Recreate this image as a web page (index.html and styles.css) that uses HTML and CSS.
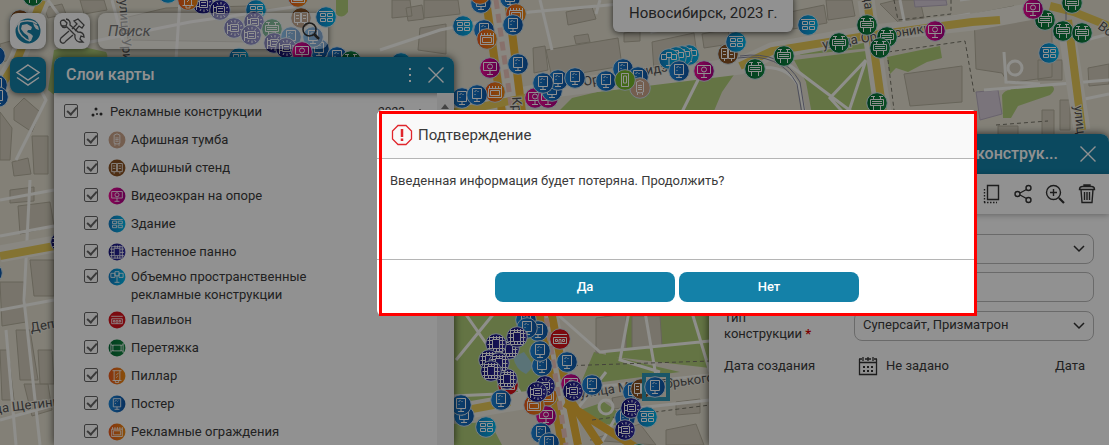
FILE: index.html
```html
<!DOCTYPE html>
<html lang="ru">
<head>
<meta charset="utf-8">
<title>Карта рекламных конструкций</title>
<meta name="viewport" content="width=device-width, initial-scale=1">
<link rel="stylesheet" href="styles.css">
</head>
<body>
<svg class="defs" width="0" height="0" aria-hidden="true">
  <defs>
    <linearGradient id="g-blue" x1="0" x2="1"><stop offset="0" stop-color="#1c87dc"/><stop offset="1" stop-color="#0e55a5"/></linearGradient>
    <linearGradient id="g-cyan" x1="0" x2="1"><stop offset="0" stop-color="#117cc4"/><stop offset="1" stop-color="#00b9ec"/></linearGradient>
    <linearGradient id="g-pink" x1="0" x2="1"><stop offset="0" stop-color="#f00c96"/><stop offset="1" stop-color="#a80086"/></linearGradient>
    <linearGradient id="g-orange" x1="0" x2="1"><stop offset="0" stop-color="#ee5a1c"/><stop offset="1" stop-color="#f08c14"/></linearGradient>
    <linearGradient id="g-indigo" x1="0" x2="1"><stop offset="0" stop-color="#14127c"/><stop offset="1" stop-color="#332ea4"/></linearGradient>
    <linearGradient id="g-green" x1="0" x2="1"><stop offset="0" stop-color="#006b34"/><stop offset="1" stop-color="#158a42"/></linearGradient>
  </defs>
  <symbol id="poster" width="22" height="22" viewBox="0 0 22 22"><circle cx="11" cy="11" r="10.3" fill="url(#g-blue)"/><path d="M6.500 4.500h9v10h-9zM11 14.500v3M8 17.500h6M8.500 8l2-2M11.500 8l1-1M8.500 11l1-1"/></symbol>
  <symbol id="building" width="22" height="22" viewBox="0 0 22 22"><circle cx="11" cy="11" r="10.3" fill="url(#g-cyan)"/><path d="M4 5.500h14M5.500 7.500h5v3h-5zM12.500 7.500h5v3h-5zM5.500 12.500h5v3h-5zM12.500 12.500h5v3h-5z"/></symbol>
  <symbol id="volume" width="22" height="22" viewBox="0 0 22 22"><circle cx="11" cy="11" r="10.3" fill="url(#g-cyan)"/><path d="M3.500 6.500h5v5h-5zM13.500 6.500h5v5h-5zM8.500 4.500h5v5h-5zM11 9.500v8M8 17.500h6"/></symbol>
  <symbol id="video" width="22" height="22" viewBox="0 0 22 22"><circle cx="11" cy="11" r="10.3" fill="url(#g-pink)"/><path d="M4.500 5.500h13v8h-13zM11 13.500v4M8 17.500h6M8.500 9.500a2.500 2.500 0 1 0 5 0a2.500 2.500 0 1 0-5 0"/></symbol>
  <symbol id="fence" width="22" height="22" viewBox="0 0 22 22"><circle cx="11" cy="11" r="10.3" fill="url(#g-orange)"/><path d="M4.500 7.500h13v9h-13zM6.500 9.500h9v5h-9zM5.500 5v3M8.500 5v3M11.500 5v3M14.500 5v3M17.500 5v3"/></symbol>
  <symbol id="pillar" width="22" height="22" viewBox="0 0 22 22"><circle cx="11" cy="11" r="10.3" fill="url(#g-orange)"/><path d="M5.500 4.500h11M7.500 4.500v12h7v-12M5.500 16.500h11M9 17v2h4v-2M10 10l3-3M10 13l2-2"/></symbol>
  <symbol id="pavilion" width="22" height="22" viewBox="0 0 22 22"><circle cx="11" cy="11" r="10.3" fill="#d8121c"/><path d="M4 6.500h14M4.500 9.500h13v6h-13M4.500 9.500v6M6.500 11.500h2v2h-2zM13.500 11.500h2v2h-2zM10 15.500v-4h2v4"/></symbol>
  <symbol id="stand" width="22" height="22" viewBox="0 0 22 22"><circle cx="11" cy="11" r="10.3" fill="#8a5222"/><path d="M4.500 5.500h6v10h-6zM11.500 5.500h6v10h-6zM6 8.500h3M6 11.500h3M13 8.500h3M13 11.500h3M7.500 16v2M14.500 16v2"/></symbol>
  <symbol id="column" width="22" height="22" viewBox="0 0 22 22"><circle cx="11" cy="11" r="10.3" fill="#cda58c"/><path d="M7.500 5q3.500-3 7 0v10q-3.500 2-7 0zM9 8.500h4M9 10.500h4M9 12.500h4M8.500 16v2M13.500 16v2"/></symbol>
  <symbol id="lime" width="22" height="22" viewBox="0 0 22 22"><circle cx="11" cy="11" r="10.3" fill="#77b82c"/><path d="M7.500 4.500h7v13h-7zM9.500 7h3v7h-3z"/></symbol>
  <symbol id="board" width="22" height="22" viewBox="0 0 22 22"><circle cx="11" cy="11" r="10.3" fill="url(#g-green)"/><path d="M4.500 7.500h13v6h-13zM6 9.500h10M6 11.500h10M7.500 4.500v3M14.500 4.500v3M7.500 14v4M14.500 14v4M5 4.500h4M13 4.500h4"/></symbol>
  <symbol id="banner" width="22" height="22" viewBox="0 0 22 22"><circle cx="11" cy="11" r="10.3" fill="url(#g-green)"/><path d="M3.500 5v12M18.500 5v12M6 7.500h10v7H6zM3.500 7l3 1M18.500 7l-3 1M3.500 15l3-1M18.500 15l-3-1"/></symbol>
  <symbol id="panel" width="22" height="22" viewBox="0 0 22 22"><circle cx="11" cy="11" r="10.3" fill="url(#g-indigo)"/><path d="M7.500 6.500h7v9h-7zM4.500 3.500v15M17.500 3.500v15M2.500 7.500h5M2.500 11.500h5M2.500 15.500h5M14.500 7.500h5M14.500 11.500h5M14.500 15.500h5M8.500 3v3M11.500 3v3M14.500 3v3M8.500 16v3M11.500 16v3M14.500 16v3M5 4.500h12M5 18.500h12"/></symbol>
  <symbol id="bracket" width="22" height="22" viewBox="0 0 22 22"><circle cx="11" cy="11" r="10.3" fill="url(#g-indigo)"/><path d="M4.500 6v11M4.500 8.500h3M4.500 13.500h3M7.500 7.500h8v7h-8zM9 9.500h5M9 12.500h5M8 3.500l1 2M12 3v2.500M16 4.500l-1.500 2M19 8.500l-2 .5M19 13l-2-.5M16 18l-1.500-2M12 19v-2.500M8 18l1-2"/></symbol>
</svg>

<main class="app">
  <svg class="map" role="img" aria-label="Карта">
    <rect width="100%" height="100%" fill="#e6e2d2"/>
    <g class="parks">
      <path d="M556 114L572 98L618 87L740 66L722 92L706 130H556z"/>
      <path d="M802 50L866 42L871 48L800 55zM794 60L866 51L876 120H813L806 82z"/>
      <path d="M887 57L940 46L942 58L927 62L908 72L896 68L890 74z"/>
      <path d="M1002 95Q1005 90 1010 90L1013 87L1050 85Q1058 88 1050 95L1018 106L1011 118H1003z"/>
      <path d="M440 306H544L550 396L440 406zM594 352L680 372L580 385zM604 306H710V368L606 356zM450 424L490 422L502 445H450zM580 410L604 402L618 412L620 426L606 424z"/>
      <path d="M54 50L74 45L106 52Q112 62 92 62L60 60L58 98L48 90zM336 0h12v12q-6 8-12 2z"/>
    </g>
    <path d="M513 357L524 352L534 366L526 374Q516 370 513 357z" fill="#9fcbd2"/>
    <g class="blocks">
      <path d="M44 8L62 4L66 14L48 18zM80 0h24l3 10-23 4zM124 18L166 8L250 6L250 42L128 40zM0 44L14 40L18 58L2 62zM14 108L24 98L40 112L32 132L14 120zM0 112L12 128L10 160H0zM32 136h16v38H34zM12 162l16-4 3 16-17 2zM10 190l24-3v14l-24 2zM18 206l32-4 4 24-34 8zM0 282h24l2 40-24 4zM30 260h24v36H34zM16 330h14l8 50H20zM38 350h14l2 34H40zM0 350h8l6 50H2zM24 384h24l4 26-20 6z"/>
      <path d="M392 0h18l2 16-20 2zM406 8l16-3 2 14-16 2zM424 0h34l2 14-36 4zM420 28l26-4v30l-28-4zM546 50l72-12 4 28-70 12zM566 12l26-5 4 12-28 6zM574 36l14-2 2 8-14 2zM624 33l16-2v10l-16 1zM652 42l42-9 4 30-44 8zM533 48l12-2 3 24-14 3zM702 34l26-5 2 15-26 4zM790 12l34-7 3 18-34 6zM826 0h26l3 16-27 4zM880 4l16-4h24l4 18-26 4zM974 14l40-8 8 14 30-3v60l-44 6-6-10-26-4zM904 74l58-8v36l-52 4zM1038 60h24v20h-24zM1088 68l21-4v20l-20 2zM998 126h20v14h-20zM1042 110h12v28l-12 4zM1060 100h10v30h-10z"/>
      <path d="M596 318l30-4v36l-30 3zM632 316h28l2 30-30 3zM590 440l50-16 16 21zM614 428l14-3 4 12-14 3zM666 430l30-6 8 21h-38zM676 402l24-3v14l-24 2zM612 398l16-3v12l-14 2z"/>
    </g>
    <g fill="#d6ccd8" stroke="#b9aec0"><path d="M914 0h32l1 5-32 2zM976 92l22-2 4 24-22 6z"/></g>
    <g class="streets">
      <path d="M0 96L30 70L46 100L16 160M0 200L54 190M0 236L54 226M0 310L54 300M48 0L80 44L190 22L300 6M30 180L24 300L40 445M0 420L54 405M6 330L16 445M112 0L128 60M180 0L176 60M380 50L440 30L530 12L620 4M540 0L552 50M600 0L596 14M648 0L652 32L700 20M744 70Q790 60 800 90L806 120M866 60L830 98L850 120M866 60L846 120M780 58L852 112M900 0L905 26L970 14M984 90L1060 84L1109 80M1004 52L1006 82L1040 84M960 0L1109 -20M1086 40L1109 34M1080 100L1109 94M700 76L682 112M452 396L548 392L720 374M460 306L520 392M500 306L456 360M548 306L600 352L720 340M630 306L620 360L660 372M644 306L656 376M690 306L710 372M575 412L606 372M600 445L620 410L710 400"/>
      <circle cx="1015" cy="68" r="7"/><circle cx="606" cy="407" r="7"/>
    </g>
    <g class="avenue-edge"><path d="M498 0L514 100L550 316L574 445M440 112L560 88L740 66L772 51L866 34L972 22L1040 10M866 0L884 120M1068 40L1082 130M42 0L16 62L0 88M0 254L60 243M440 415L550 396"/></g>
    <g class="avenue"><path d="M486 0L502 112L540 316L562 445M508 0L522 112L552 316L578 445" stroke="#ebb638"/><path d="M440 115L560 91M740 66L772 51L866 36L972 22L1000 20M867 0L884 120M1050 6L1074 12L1109 26M1068 20L1082 130M42 0L16 62L0 88M0 256L60 245M440 415L510 402" stroke="#e8cb58"/><path d="M565 403L640 450M570 400L600 445" stroke="#ebb638"/></g>
    <path d="M496 0L512 112L546 316L566 445" fill="none" stroke="#edc6bd" stroke-width="5" stroke-dasharray="9 5"/>
    <g fill="none" stroke="#787568" stroke-dasharray="4 3"><path d="M888 52L965 41L974 92M888 60L894 110M894 0L898 20L951 14V0M996 125L1048 121M560 366L740 360M592 420L710 405"/></g>
    <g fill="none" stroke="#8889a0"><path d="M740 56Q782 50 800 82L806 120M738 58Q780 52 797 84L803 120M1066 10V20"/></g>
    <g class="map-text">
      <text transform="translate(584 86) rotate(-10)">Орджоникидзе</text>
      <text transform="translate(823 49) rotate(-9)">улица Орджоники</text>
      <text transform="translate(119 0) rotate(86)">улица Урицкого</text>
      <text transform="translate(512 97) rotate(86)">Красный</text>
      <text transform="translate(862 -26) rotate(86)">улица</text>
      <text transform="translate(1074 106) rotate(84)">улица</text>
      <text transform="translate(1097 28) rotate(36)">Вокзальная</text>
      <text transform="translate(31 332) rotate(-10)">Депутатская</text>
      <text transform="translate(-26 416) rotate(-7)">улица Щетинкина</text>
      <text transform="translate(580 398) rotate(-8)">улица Максима</text>
      <text transform="translate(660 389) rotate(-8)">Горького</text>
    </g>

    <g class="markers">
      <use href="#board" x="22" y="-15"/><use href="#building" x="157" y="-18"/><use href="#bracket" x="192" y="-7"/><use href="#pillar" x="177" y="-11"/><use href="#bracket" x="209" y="-1"/><use href="#building" x="245" y="-1"/><use href="#fence" x="287" y="-14"/>
      <use href="#stand" x="9" y="9"/><use href="#poster" x="-16" y="45"/><use href="#poster" x="-14" y="74"/><use href="#poster" x="-13" y="86"/><use href="#panel" x="50" y="231"/><use href="#poster" x="-19" y="262"/>
      <use href="#stand" x="290" y="7"/><use href="#bracket" x="243" y="11"/><use href="#bracket" x="223" y="17"/><use href="#bracket" x="240" y="24"/><use href="#board" x="261" y="18"/><use href="#bracket" x="263" y="32"/><use href="#poster" x="280" y="26"/><use href="#poster" x="308" y="38"/><use href="#poster" x="302" y="26"/><use href="#bracket" x="275" y="37"/><use href="#poster" x="326" y="46"/><use href="#board" x="340" y="50"/><use href="#building" x="228" y="47"/>
      <use href="#poster" x="470" y="-8"/><use href="#fence" x="469" y="-17"/><use href="#poster" x="499" y="-13"/><use href="#fence" x="505" y="3"/><use href="#poster" x="502" y="14"/><use href="#building" x="452" y="15"/><use href="#poster" x="473" y="19"/><use href="#fence" x="476" y="28"/><use href="#video" x="479" y="57"/><use href="#poster" x="507" y="53"/><use href="#fence" x="484" y="81"/><use href="#poster" x="451" y="87"/><use href="#poster" x="466" y="84"/><use href="#building" x="390" y="52"/>
      <use href="#video" x="524" y="87"/><use href="#video" x="537" y="87"/><use href="#poster" x="541" y="80"/><use href="#poster" x="547" y="69"/><use href="#poster" x="532" y="72"/><use href="#poster" x="564" y="67"/><use href="#poster" x="595" y="70"/><use href="#poster" x="612" y="58"/><use href="#poster" x="627" y="66"/><use href="#column" x="629" y="77"/><use href="#lime" x="614" y="69"/>
      <use href="#volume" x="678" y="44"/><use href="#volume" x="671" y="45"/><use href="#volume" x="665" y="46"/><use href="#volume" x="658" y="48"/><use href="#poster" x="668" y="60"/><use href="#video" x="693" y="60"/><use href="#stand" x="717" y="43"/><use href="#building" x="725" y="31"/>
      <use href="#building" x="797" y="14"/><use href="#board" x="856" y="14"/><use href="#board" x="876" y="26"/><use href="#board" x="869" y="37"/><use href="#board" x="828" y="32"/><use href="#board" x="773" y="45"/><use href="#board" x="744" y="58"/><use href="#board" x="866" y="92"/><use href="#video" x="924" y="20"/><use href="#board" x="1034" y="9"/><use href="#video" x="1022" y="-2"/><use href="#board" x="1061" y="-8"/><use href="#board" x="1052" y="20"/><use href="#board" x="1071" y="22"/><use href="#building" x="1038" y="42"/>
      <use href="#poster" x="515" y="309"/><use href="#poster" x="527" y="320"/><use href="#poster" x="516" y="317"/><use href="#pavilion" x="549" y="328"/><use href="#pavilion" x="497" y="374"/><use href="#panel" x="498" y="338"/><use href="#panel" x="485" y="333"/><use href="#panel" x="478" y="349"/><use href="#panel" x="496" y="368"/><use href="#panel" x="488" y="352"/><use href="#panel" x="480" y="360"/><use href="#panel" x="506" y="326"/><use href="#poster" x="490" y="389"/><use href="#poster" x="531" y="355"/><use href="#poster" x="529" y="340"/><use href="#poster" x="556" y="351"/><use href="#poster" x="453" y="405"/><use href="#poster" x="450" y="394"/><use href="#building" x="475" y="416"/>
      <use href="#fence" x="536" y="385"/><use href="#bracket" x="534" y="375"/><use href="#video" x="535" y="405"/><use href="#fence" x="523" y="394"/><use href="#bracket" x="526" y="381"/><use href="#video" x="560" y="373"/><use href="#bracket" x="562" y="380"/><use href="#poster" x="581" y="374"/><use href="#poster" x="530" y="422"/><use href="#poster" x="538" y="432"/><use href="#poster" x="622" y="381"/><use href="#stand" x="630" y="378"/><use href="#poster" x="614" y="407"/><use href="#bracket" x="620" y="397"/><use href="#building" x="636" y="406"/><use href="#bracket" x="614" y="419"/><use href="#board" x="628" y="443"/>
      <rect x="644" y="375" width="24" height="24" fill="none" stroke="#2f97b8" stroke-width="4"/><use href="#poster" x="644" y="376"/>
    </g>
  </svg>

  <nav class="tools" aria-label="Инструменты">
    <button class="tool" type="button" aria-label="Карта мира"><svg width="30" height="30" viewBox="0 0 30 30"><circle cx="15" cy="15" r="12.500" fill="#1481a8"/><path d="M9 9L14 8L19 11L18 14L15 14L14 16L18 18L20 20L18 25L16 25L15 20L11 17L8 13zM20 7L25 10L26 14L23 13L21 10z" fill="#f3f6f7"/><path d="M2 12Q5 5 12 5Q19 4 24 8M7 6Q3 14 9 20Q13 24 17 25" fill="none" stroke="#f3f6f7" stroke-width="1.500"/></svg></button>
    <button class="tool" type="button" aria-label="Настройки"><svg width="28" height="28" viewBox="0 0 28 28" fill="none" stroke="#555" stroke-width="1.300"><path d="M3 8Q1 3 6 3L9 6L8 9L5 9zM3 8Q5 12 9 10L17 18Q16 23 21 25L25 25L22 22L23 19L26 20Q26 15 20 15L12 8Q13 3 8 2M14 12L19 7L16 4L20 2L26 8L24 11L21 9L17 14M11 14L3 21Q1 24 4 26Q6 27 8 24L15 18"/></svg></button>
    <form class="search"><input type="text" placeholder="Поиск" aria-label="Поиск"><button type="button" aria-label="Найти"><svg width="20" height="20" viewBox="0 0 20 20" fill="none" stroke="#333" stroke-width="1.500"><circle cx="8.500" cy="8.500" r="6.500"/><path d="M13 13l5 5" stroke-width="2.500"/></svg></button></form>
  </nav>
  <svg class="map map-front" aria-hidden="true"><g class="markers"><use href="#building" x="315" y="6"/><use href="#video" x="291" y="41"/></g></svg>
  <button class="tool layers-button" type="button" aria-label="Слои"><svg width="26" height="26" viewBox="0 0 26 26" fill="none" stroke="#fff" stroke-width="1.500"><path d="M13 3l11 7.500-11 7.500-11-7.500zM2 15.500L13 23l11-7.500"/></svg></button>
  <div class="place">Новосибирск, 2023 г.</div>

  <section class="panel layers">
    <header class="panel-head"><h2>Слои карты</h2>
      <button type="button" aria-label="Меню"><svg width="20" height="20" viewBox="0 0 20 20" fill="#fff"><path d="M9 3h2v2H9zM9 9h2v2H9zM9 15h2v2H9z"/></svg></button>
      <button type="button" aria-label="Закрыть"><svg width="20" height="20" viewBox="0 0 20 20" stroke="#fff" stroke-width="1.400"><path d="M2.500 2.500l15 15M17.500 2.500l-15 15"/></svg></button>
    </header>
    <div class="layers-body">
      <ul class="tree">
        <li class="root"><label><input type="checkbox" checked><svg class="dots" width="12" height="12" viewBox="0 0 12 12" fill="#333"><circle cx="5" cy="2" r="1.500"/><circle cx="2" cy="8" r="1.500"/><circle cx="10" cy="7" r="1.500"/><circle cx="6" cy="7" r="1"/></svg><span>Рекламные конструкции</span></label><span class="year">2023</span><svg class="fold" width="10" height="8" viewBox="0 0 10 8" fill="none" stroke="#333" stroke-width="1.500"><path d="M1 6l4-4 4 4"/></svg></li>
        <li><label><input type="checkbox" checked><svg class="kind" viewBox="0 0 22 22"><use href="#column"/></svg><span>Афишная тумба</span></label></li>
        <li><label><input type="checkbox" checked><svg class="kind" viewBox="0 0 22 22"><use href="#stand"/></svg><span>Афишный стенд</span></label></li>
        <li><label><input type="checkbox" checked><svg class="kind" viewBox="0 0 22 22"><use href="#video"/></svg><span>Видеоэкран на опоре</span></label></li>
        <li><label><input type="checkbox" checked><svg class="kind" viewBox="0 0 22 22"><use href="#building"/></svg><span>Здание</span></label></li>
        <li><label><input type="checkbox" checked><svg class="kind" viewBox="0 0 22 22"><use href="#panel"/></svg><span>Настенное панно</span></label></li>
        <li><label><input type="checkbox" checked><svg class="kind" viewBox="0 0 22 22"><use href="#volume"/></svg><span>Объемно пространственные<br>рекламные конструкции</span></label></li>
        <li><label><input type="checkbox" checked><svg class="kind" viewBox="0 0 22 22"><use href="#pavilion"/></svg><span>Павильон</span></label></li>
        <li><label><input type="checkbox" checked><svg class="kind" viewBox="0 0 22 22"><use href="#banner"/></svg><span>Перетяжка</span></label></li>
        <li><label><input type="checkbox" checked><svg class="kind" viewBox="0 0 22 22"><use href="#pillar"/></svg><span>Пиллар</span></label></li>
        <li><label><input type="checkbox" checked><svg class="kind" viewBox="0 0 22 22"><use href="#poster"/></svg><span>Постер</span></label></li>
        <li><label><input type="checkbox" checked><svg class="kind" viewBox="0 0 22 22"><use href="#fence"/></svg><span>Рекламные ограждения</span></label></li>
      </ul>
      <div class="scroll"><svg width="8" height="5" viewBox="0 0 8 5" fill="#777"><path d="M4 0l4 5H0z"/></svg></div>
    </div>
  </section>

  <section class="panel card">
    <header class="panel-head card-head"><h2>Рекламная конструк...</h2>
      <button type="button" aria-label="Закрыть"><svg width="20" height="20" viewBox="0 0 20 20" stroke="#fff" stroke-width="1.400"><path d="M2.500 2.500l15 15M17.500 2.500l-15 15"/></svg></button>
    </header>
    <div class="actions">
      <button type="button" aria-label="Копировать"><svg viewBox="0 0 24 24"><path d="M8.500 3.500h11v14h-11z"/><path d="M5.500 7v14M5 20.500h13" stroke-dasharray="1.500 1.500"/></svg></button>
      <button type="button" aria-label="Поделиться"><svg viewBox="0 0 24 24"><circle cx="6.500" cy="12" r="2.500"/><circle cx="17.500" cy="6" r="2.500"/><circle cx="17.500" cy="18" r="2.500"/><path d="M9 11l6.500-3.500M9 13l6.500 3.500"/></svg></button>
      <button type="button" aria-label="Показать на карте"><svg viewBox="0 0 24 24"><circle cx="10.500" cy="10.500" r="7"/><path d="M10.500 7v7M7 10.500h7"/><path d="M16 16l5 5" stroke-width="2.200"/></svg></button>
      <button type="button" aria-label="Удалить"><svg viewBox="0 0 24 24"><path d="M4.500 7.500q0-3 3-3h9q3 0 3 3zM9 4.500V3h6v1.500M6 7.500l1 13h10l1-13M9.500 10v8M12 10v8M14.500 10v8"/></svg></button>
    </div>
    <form class="fields">
      <div class="field"><span></span><div class="control"><select aria-label="Вид"><option></option></select><svg class="chevron" viewBox="0 0 12 8"><path d="M1 1l5 5 5-5"/></svg></div></div>
      <div class="field"><span></span><div class="control"><input type="text" aria-label="Номер"></div></div>
      <div class="field"><label for="type">Тип<br>конструкции <b>*</b></label><div class="control"><select id="type"><option>Суперсайт, Призматрон</option></select><svg class="chevron" viewBox="0 0 12 8"><path d="M1 1l5 5 5-5"/></svg></div></div>
      <div class="field date"><span>Дата создания</span><div class="date-row"><svg width="20" height="20" viewBox="0 0 20 20" fill="none" stroke="#333" stroke-width="1.300"><path d="M1.500 3v15.500h17V3M1.500 6.500h17M1 3h3M7 3h6M16 3h3M5 1v4M10 1v4M15 1v4"/><path d="M5 11h2m2 0h2m2 0h2M5 15h2m2 0h2m2 0h2" stroke-width="2"/></svg><span>Не задано</span><span class="date-kind">Дата</span></div></div>
    </form>
  </section>

  <div class="scrim"></div>
  <div class="dialog" role="dialog" aria-labelledby="dialog-title">
    <header><svg width="22" height="22" viewBox="0 0 22 22" fill="none" stroke="#e0262c" stroke-width="1.300"><path d="M7 1.500h8l5.500 5.500v8L15 20.500H7L1.500 15V7z"/><path d="M11 5v8M11 14.500v2.500" stroke-width="2.500"/></svg><h1 id="dialog-title">Подтверждение</h1></header>
    <p>Введенная информация будет потеряна. Продолжить?</p>
    <footer><button type="button">Да</button><button type="button">Нет</button></footer>
  </div>
</main>
</body>
</html>
```
FILE: styles.css
```css
* { box-sizing: border-box; }
body { margin: 0; font: 13px/18px Roboto, "Noto Sans", sans-serif; color: #3a3a3a; overflow: hidden; }
button, input, select { font: inherit; color: inherit; }
button { padding: 0; border: 0; background: none; display: grid; place-items: center; }
h1, h2, p, ul { margin: 0; padding: 0; }
.defs { position: absolute; }
.app { position: relative; min-height: 100vh; overflow: hidden; }

.map { position: absolute; inset: 0; width: 100%; height: 100%; }
.map-front { pointer-events: none; }
.parks { fill: #b0cd78; }
.blocks { fill: #d3cdbc; stroke: #b6b09e; }
.streets { fill: none; stroke: #faf9f4; stroke-width: 3; }
.avenue-edge { fill: none; stroke: #f1eee3; stroke-width: 17; }
.avenue { fill: none; stroke-width: 8; }
.map-text { font-size: 13px; fill: #555; stroke: #eeeade; stroke-width: 2; paint-order: stroke; }
.markers { stroke: #cfe0ea; }
symbol path { fill: none; stroke: #fff; stroke-width: 1; }

.tools { position: absolute; top: 13px; left: 10px; display: flex; gap: 8px; }
.tool { width: 36px; height: 36px; border-radius: 8px; background: #fff; box-shadow: 0 1px 6px rgba(0, 0, 0, .6); }
.layers-button { position: absolute; top: 57px; left: 10px; background: #1481a8; }
.search { display: flex; align-items: center; width: 230px; height: 36px; padding: 0 7px 0 10px; border-radius: 8px; background: rgba(255, 255, 255, .5); box-shadow: 0 1px 6px rgba(0, 0, 0, .6); }
.search input { flex: 1; min-width: 0; padding: 0; border: 0; background: none; font-size: 15px; font-style: italic; }
.search input::placeholder { color: #777; opacity: 1; }
.place { position: absolute; top: -6px; left: 613px; padding: 8px 16px; line-height: 22px; font-size: 15px; border-radius: 6px; background: #fff; box-shadow: 0 1px 6px rgba(0, 0, 0, .7); }

.panel { position: absolute; bottom: 0; width: 400px; display: flex; flex-direction: column; border-radius: 8px 8px 0 0; background: #fff; box-shadow: 0 0 8px rgba(0, 0, 0, .7); overflow: hidden; }
.layers { top: 57px; left: 54px; }
.card { top: 134px; right: 0; }
.panel-head { display: flex; align-items: center; gap: 6px; height: 36px; flex: none; padding: 0 8px 0 12px; color: #fff; background: #1481a8; box-shadow: 0 1px 6px rgba(0, 0, 0, .5); }
.panel-head h2 { flex: 1; font-size: 16px; font-weight: 500; white-space: nowrap; }
.card-head { height: 40px; gap: 20px; padding-right: 11px; box-shadow: none; }
.card-head h2 { text-align: right; }

.layers-body { display: flex; flex: 1; }
.tree { flex: 1; list-style: none; padding: 5px 12px 0 10px; }
.tree li { min-height: 28px; padding: 2px 0 2px 20px; display: flex; align-items: center; }
.tree .root { padding-left: 0; }
.tree label { flex: 1; display: flex; align-items: flex-start; }
.tree input { appearance: none; position: relative; flex: none; width: 14px; height: 14px; margin: 1px 10px 0 0; border: 1px solid #666; border-radius: 2px; }
.tree input::after { content: ""; position: absolute; left: 4px; top: 0; width: 4px; height: 8px; border: solid #666; border-width: 0 2px 2px 0; transform: rotate(42deg); }
.kind { flex: none; width: 18px; height: 18px; margin-right: 5px; }
.dots { margin: 4px 7px 0 3px; }
.year { font-size: 12px; }
.fold { margin-left: 10px; }
.scroll { width: 17px; padding: 3px 4px; background: #f1f1f1; }

.actions { display: flex; justify-content: flex-end; align-items: center; gap: 8px; height: 40px; flex: none; padding-right: 10px; box-shadow: 0 1px 6px rgba(0, 0, 0, .3); }
.actions svg { display: block; width: 24px; height: 24px; fill: none; stroke: #333; stroke-width: 1.400; }
.fields { display: grid; gap: 8px; padding: 20px 15px; }
.field { display: grid; grid-template-columns: 130px 1fr; align-items: center; height: 30px; line-height: 16px; }
.field b { color: #d00; }
.control { position: relative; }
.control select, .control input { display: block; appearance: none; width: 100%; height: 30px; padding: 0 8px 2px; border: 1px solid #bbb; border-radius: 8px; background: none; }
.chevron { position: absolute; right: 9px; top: 11px; width: 12px; height: 8px; fill: none; stroke: #333; stroke-width: 1.500; pointer-events: none; }
.date { height: 36px; }
.date-row { display: flex; align-items: center; gap: 8px; padding-left: 4px; }
.date-kind { margin-left: auto; padding-right: 9px; }

.scrim { position: absolute; inset: 0; background: rgba(0, 0, 0, .43); }
.dialog { position: absolute; top: 110px; left: 377px; width: 600px; min-height: 206px; display: flex; flex-direction: column; background: #fff; border-radius: 6px; }
.dialog::after { content: ""; position: absolute; inset: 1px 0 0 2px; border: 3px solid #f00; pointer-events: none; }
.dialog header { display: flex; align-items: center; gap: 5px; height: 49px; padding: 2px 14px 0; border-bottom: 1px solid #b5b5b5; border-radius: 6px 6px 0 0; background: #f9f9f9; }
.dialog h1 { font-size: 15px; font-weight: 400; }
.dialog p { flex: 1; padding: 13px; }
.dialog footer { display: flex; justify-content: center; gap: 4px; padding: 12px 0 14px; border-top: 1px solid #b5b5b5; }
.dialog footer button { width: 180px; height: 30px; border-radius: 8px; color: #fff; background: #1481a8; font-weight: 500; }
```
